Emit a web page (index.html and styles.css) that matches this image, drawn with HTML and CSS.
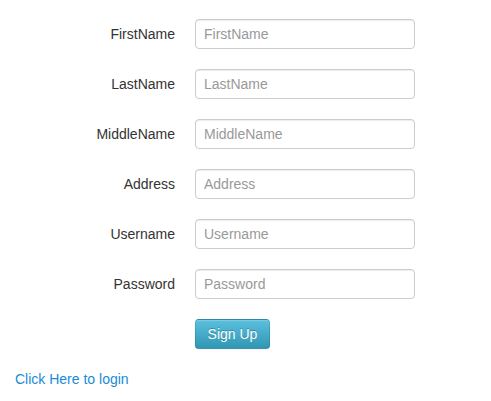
FILE: index.html
```html
<!DOCTYPE html>
<html>
<head>
<meta charset="utf-8">
<link rel="stylesheet" href="styles.css">
</head>
<body>
<form class="form">
  <label class="label" for="f1">FirstName</label>
  <input class="input" id="f1" type="text" placeholder="FirstName">
  <label class="label" for="f2">LastName</label>
  <input class="input" id="f2" type="text" placeholder="LastName">
  <label class="label" for="f3">MiddleName</label>
  <input class="input" id="f3" type="text" placeholder="MiddleName">
  <label class="label" for="f4">Address</label>
  <input class="input" id="f4" type="text" placeholder="Address">
  <label class="label" for="f5">Username</label>
  <input class="input" id="f5" type="text" placeholder="Username">
  <label class="label" for="f6">Password</label>
  <input class="input" id="f6" type="password" placeholder="Password">
  <span></span>
  <div><button class="btn" type="button">Sign Up</button></div>
</form>
<div class="footer"><a class="link" href="#">Click Here to login</a></div>
</body>
</html>
```
FILE: styles.css
```css
html, body {
  margin: 0;
  padding: 0;
  background: #fff;
}
body {
  font-family: "Liberation Sans", Arial, sans-serif;
  font-size: 14px;
  line-height: 20px;
  color: #333;
}
.form {
  display: grid;
  grid-template-columns: 175px 220px;
  column-gap: 20px;
  row-gap: 20px;
  align-items: center;
  padding-top: 19px;
  margin: 0;
}
.label {
  text-align: right;
  color: #333;
}
.input {
  box-sizing: border-box;
  width: 220px;
  height: 30px;
  margin: 0;
  padding: 0 8px;
  border: 1px solid #ccc;
  border-radius: 4px;
  box-shadow: inset 0 1px 1px rgba(0,0,0,0.075);
  font-family: "Liberation Sans", Arial, sans-serif;
  font-size: 14px;
  color: #555;
  background: #fff;
  outline: none;
}
.input::placeholder {
  color: #999;
}
.btn {
  box-sizing: border-box;
  height: 30px;
  width: 75px;
  margin: 0;
  padding: 0;
  font-family: "Liberation Sans", Arial, sans-serif;
  font-size: 14px;
  color: #fff;
  text-shadow: 0 -1px 0 rgba(0,0,0,0.25);
  background: linear-gradient(to bottom, #5bc0de, #2f96b4);
  border: 1px solid #2f96b4;
  border-color: rgba(0,0,0,0.1) rgba(0,0,0,0.1) rgba(0,0,0,0.25);
  border-radius: 4px;
  box-shadow: inset 0 1px 0 rgba(255,255,255,0.2), 0 1px 2px rgba(0,0,0,0.05);
  cursor: pointer;
}
.footer {
  padding: 20px 15px 0;
}
.link {
  color: #1a8ad6;
  text-decoration: none;
}
```
